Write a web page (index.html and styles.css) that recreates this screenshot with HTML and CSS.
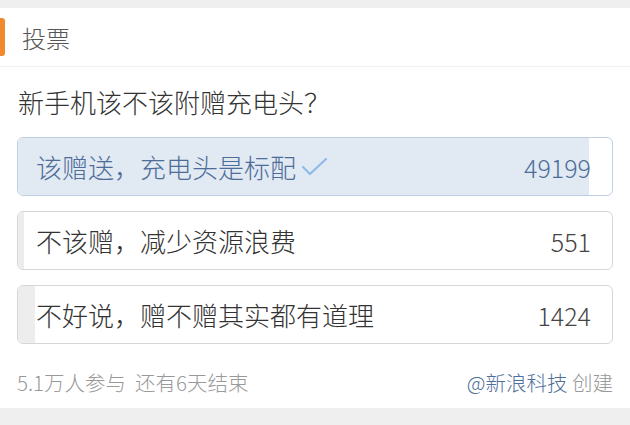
FILE: index.html
```html
<!DOCTYPE html>
<html lang="zh-CN">
<head>
    <meta charset="UTF-8">
    <meta name="viewport" content="width=device-width, initial-scale=1.0">
    <title>投票</title>
    <link rel="stylesheet" href="styles.css">
</head>
<body>
<div class="vote-card">
    <div class="vote-header">投票</div>

    <div class="vote-body">
        <h2 class="vote-question">新手机该不该附赠充电头？</h2>

        <ul class="vote-options">
            <li class="option chosen">
                <span class="option-fill" style="width: 96.14%"></span>
                <span class="option-text">该赠送，充电头是标配
                    <svg class="check" width="26" height="20" viewBox="0 0 26 20"><path d="M1 10 L8 17 L24 2" fill="none" stroke="#8fbbe8" stroke-width="2.2" stroke-linecap="round" stroke-linejoin="round"/></svg>
                </span>
                <span class="option-count">49199</span>
            </li>
            <li class="option">
                <span class="option-fill" style="width: 1.08%"></span>
                <span class="option-text">不该赠，减少资源浪费</span>
                <span class="option-count">551</span>
            </li>
            <li class="option">
                <span class="option-fill" style="width: 2.78%"></span>
                <span class="option-text">不好说，赠不赠其实都有道理</span>
                <span class="option-count">1424</span>
            </li>
        </ul>

        <div class="vote-footer">
            <span class="meta">5.1万人参与<span class="gap"></span>还有6天结束</span>
            <span class="meta"><a class="author" href="#">@新浪科技</a> 创建</span>
        </div>
    </div>
</div>
</body>
</html>
```

FILE: styles.css
```css
body {
  margin: 0;
  background-color: #efefef;
  font-family: "Noto Sans CJK SC", "Noto Sans", sans-serif;
  font-weight: 300;
}

.vote-card {
  margin-top: 8px;
  height: 400px;
  background-color: #fff;
}

/* header with orange marker */
.vote-header {
  display: flex;
  align-items: center;
  height: 58px;
  border-bottom: 1px solid #f1f1f1;
  font-size: 24px;
  color: #555;
}
.vote-header::before {
  content: "";
  width: 5px;
  height: 38px;
  margin-right: 17px;
  border-radius: 0 3px 3px 0;
  background-color: #f08a2c;
}

.vote-body {
  padding: 0 17px;
}

.vote-question {
  margin: 0;
  padding: 16px 0 17px 1px;
  font-size: 26px;
  line-height: 37px;
  font-weight: 300;
  color: #333;
}

.vote-options {
  list-style-type: none;
  margin: 0;
  padding: 0;
}

.option {
  position: relative;
  display: flex;
  align-items: center;
  justify-content: space-between;
  height: 57px;
  margin-bottom: 15px;
  padding: 0 21px 0 18px;
  border: 1px solid #d6d6d6;
  border-radius: 6px;
  overflow: hidden;
  font-size: 26px;
  color: #333;
}
.option-fill {
  position: absolute;
  left: 0;
  top: 0;
  bottom: 0;
  background-color: #ededed;
}
.option-text, .option-count {
  position: relative;
}
.option-text {
  display: flex;
  align-items: center;
}
.option-count {
  font-size: 25px;
  color: #444;
}

.option.chosen {
  border-color: #bdd0e5;
  color: #4d6d98;
}
.option.chosen .option-fill {
  background-color: #e1e9f3;
}
.option.chosen .option-count {
  color: #4d6d98;
}
.check {
  margin-left: 6px;
}

.vote-footer {
  display: flex;
  justify-content: space-between;
  padding-top: 8px;
  font-size: 20.5px;
  line-height: 30px;
}
.meta {
  color: #999;
}
.gap {
  display: inline-block;
  width: 9px;
}
.author {
  color: #50709b;
  text-decoration: none;
}
```
